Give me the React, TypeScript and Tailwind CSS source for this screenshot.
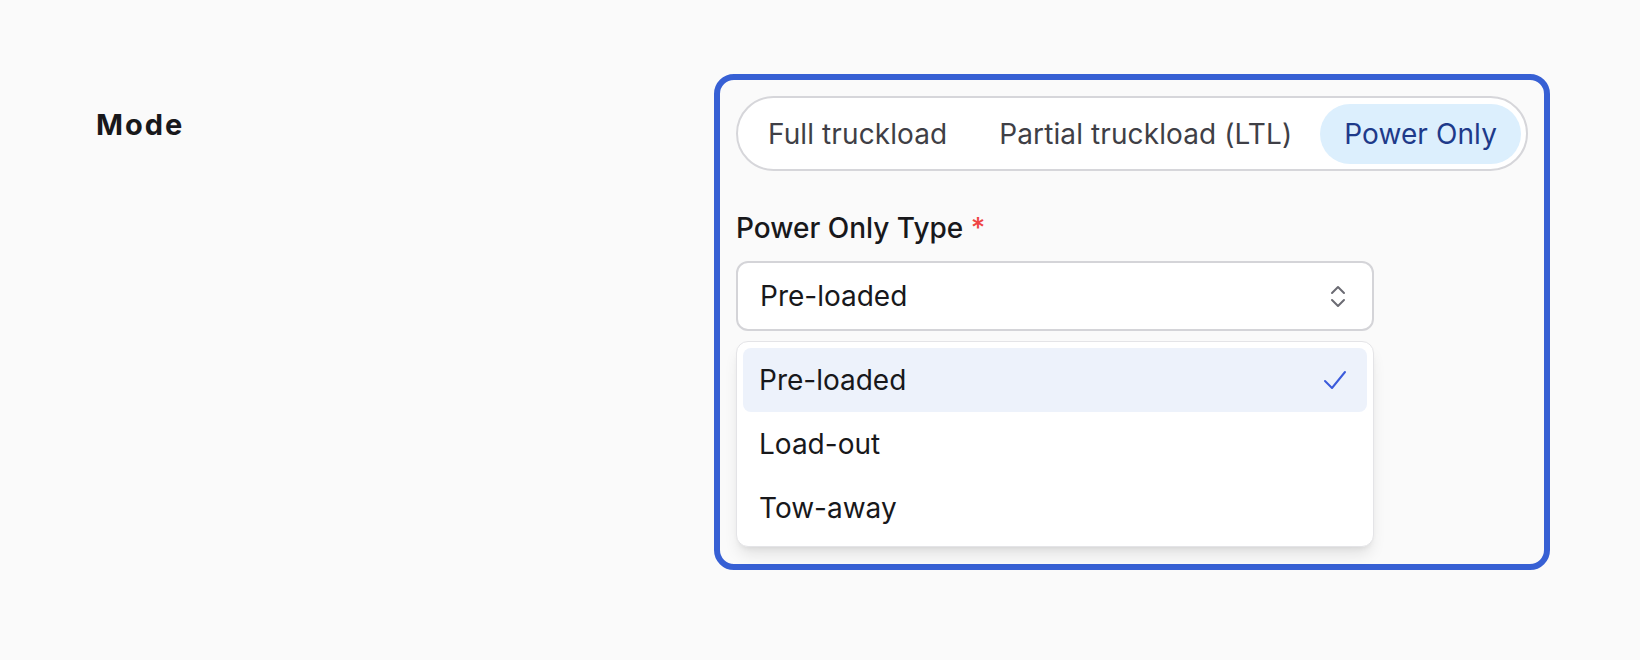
import { useState } from "react";

const modes = ["Full truckload", "Partial truckload (LTL)", "Power Only"];
const powerOnlyTypes = ["Pre-loaded", "Load-out", "Tow-away"];

function ChevronsUpDown() {
  return (
    <svg width="16" height="25" viewBox="0 0 16 25" fill="none" stroke="#6b6b73" strokeWidth="2" strokeLinecap="round" strokeLinejoin="round">
      <path d="M2 9 L8 3 L14 9" />
      <path d="M2 16 L8 22 L14 16" />
    </svg>
  );
}

function Check() {
  return (
    <svg width="24" height="20" viewBox="0 0 24 20" fill="none" stroke="#3b5bdb" strokeWidth="2" strokeLinecap="round" strokeLinejoin="round">
      <path d="M2 11 L9 18 L22 2" />
    </svg>
  );
}

export default function App() {
  const [mode, setMode] = useState("Power Only");
  const [type, setType] = useState("Pre-loaded");

  return (
    <div className="min-h-screen bg-[#fafafa] font-['Inter','Liberation_Sans',sans-serif] flex items-start pl-24 pt-[74px]">
      {/* Label column */}
      <div className="w-[618px] shrink-0">
        <div className="mt-[30px] text-[29px] leading-[42px] font-bold tracking-[2px] text-[#18181b]">Mode</div>
      </div>

      {/* Field column */}
      <div className="w-[836px] shrink-0 rounded-[20px] border-[6px] border-[#3760d4] px-4 pt-4 pb-[17px]">
        {/* Segmented control */}
        <div className="flex gap-1 rounded-full border-2 border-[#d6d6da] bg-white px-[6px] py-[5.5px]">
          {modes.map((m) => (
            <button
              key={m}
              type="button"
              onClick={() => setMode(m)}
              className={
                m === mode
                  ? "h-[60px] shrink-0 whitespace-nowrap rounded-full bg-[#dceffd] px-6 text-[28px] tracking-[0.1px] text-[#1e3a8a]"
                  : "h-[60px] shrink-0 whitespace-nowrap rounded-full px-6 text-[28px] tracking-[0.1px] text-[#3f3f46]"
              }
            >
              {m}
            </button>
          ))}
        </div>

        {/* Power only type */}
        <div className="mt-9 text-[28px] leading-[42px] font-medium text-[#18181b]">
          Power Only Type <span className="text-[#ef4444]">*</span>
        </div>

        <div className="w-[638px]">
          <div className="mt-3 flex h-[70px] items-center justify-between rounded-xl border-2 border-[#d4d4d8] bg-white pl-[22px] pr-[26px] text-[28px] text-[#18181b]">
            <span>{type}</span>
            <ChevronsUpDown />
          </div>

          <div className="mt-2.5 rounded-xl border border-[#e4e4e7] bg-white p-[6px] shadow-lg">
            {powerOnlyTypes.map((t) => (
              <div
                key={t}
                onClick={() => setType(t)}
                className={
                  t === type
                    ? "flex h-16 items-center justify-between rounded-lg bg-[#edf2fb] pl-4 pr-5 text-[28px] text-[#18181b]"
                    : "flex h-16 items-center justify-between rounded-lg pl-4 pr-5 text-[28px] text-[#18181b]"
                }
              >
                <span>{t}</span>
                {t === type && <Check />}
              </div>
            ))}
          </div>
        </div>
      </div>
    </div>
  );
}
